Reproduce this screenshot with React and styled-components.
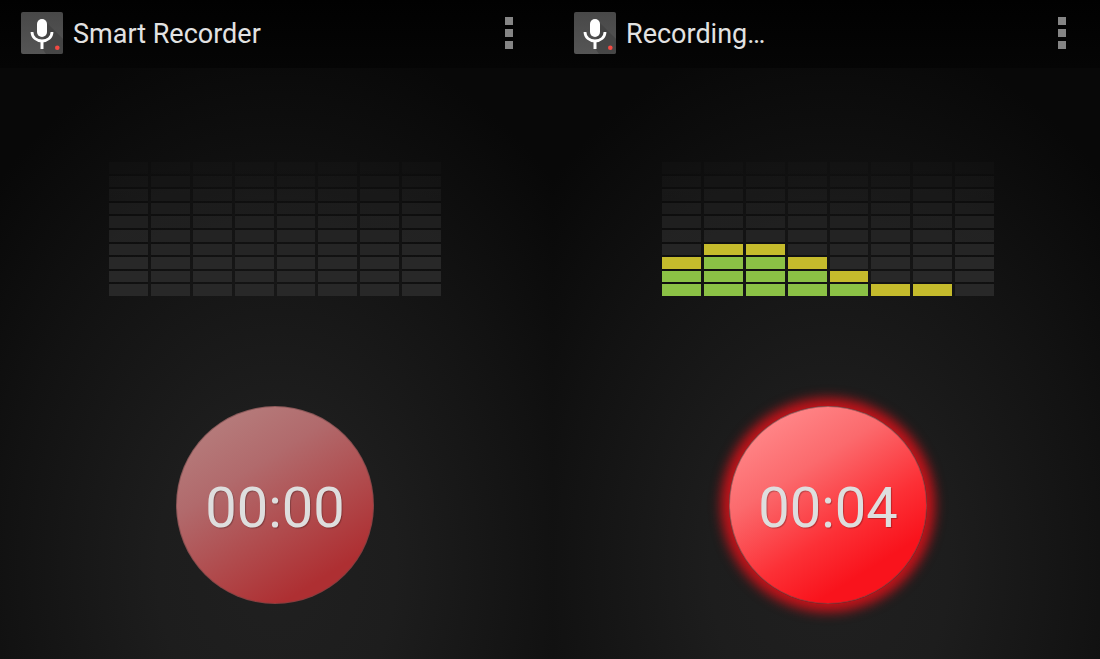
import React from 'react';
import styled, { createGlobalStyle, css } from 'styled-components';


const GlobalStyle = createGlobalStyle`
    * {
        box-sizing: border-box;
    }
    body {
        margin: 0;
        background-color: #0d0d0d;
        font-family: Roboto, "Noto Sans", sans-serif;
    }
`
const Page = styled.div`
    overflow: hidden;
`
const Screens = styled.div`
    display: grid;
    grid-template-columns: 1fr 1fr;
    margin-right: -6px;
    min-height: 100vh;
`
const Screen = styled.main`
    display: flex;
    flex-direction: column;
    align-items: center;
    padding: 0 3px 54px 0;
    background:
        linear-gradient(#010101, #050505) 0 0 / 100% 68px no-repeat,
        radial-gradient(ellipse 72% 82% at 50% 86%, #202020 0%, #1d1d1d 30%, #121212 68%, #080808 100%);
`
const Header = styled.header`
    width: 100%;
    height: 68px;
    padding: 0 37px 0 21px;
    display: flex;
    align-items: center;
`
const Logo = styled.svg`
    width: 42px;
    height: 42px;
    flex: none;
    margin-bottom: 2px;
`
const Title = styled.h1`
    flex: 1;
    margin: 0 0 0 10px;
    color: #e2e2e2;
    font-size: 27px;
    font-weight: 400;
    line-height: 32px;
`
const MenuButton = styled.button`
    display: flex;
    flex-direction: column;
    gap: 4px;
    padding: 0;
    margin-bottom: 2px;
    border: none;
    background: none;
    cursor: pointer;
`
const Dot = styled.span`
    width: 8px;
    height: 8px;
    background-color: #858585;
`
const Meter = styled.div`
    width: 332px;
    height: 134px;
    margin-top: 94px;
    display: grid;
    grid-template-columns: repeat(8, 1fr);
    column-gap: 3px;
`
const Bar = styled.div`
    display: grid;
    grid-template-rows: repeat(10, 1fr);
    row-gap: 2px;
    background: linear-gradient(rgba(0, 0, 0, 0), rgba(0, 0, 0, 0.15) 30%);
`
const segmentColors = {
    level: '#8bc145',
    peak: '#c5bb2c',
    off: '#282828',
}
const Segment = styled.div`
    background-color: ${({ $state }) => segmentColors[$state]};
    opacity: ${({ $state, $row }) => ($state === 'off' ? [0.16, 0.28, 0.42, 0.55, 0.68, 0.8, 0.9, 1, 1, 1][$row] : 1)};
`
const RecordButton = styled.button`
    width: 198px;
    height: 198px;
    margin-top: 110px;
    padding: 6px 0 0;
    border: 1px solid rgba(110, 70, 70, 0.6);
    border-radius: 50%;
    background: linear-gradient(148deg, #b57a7a 14%, #b16a6c 34%, #b04a4c 60%, #ae2f32 82%) border-box;
    color: #dedede;
    font-family: inherit;
    font-size: 56px;
    line-height: 64px;
    text-shadow: 1px 1px 1px rgba(0, 0, 0, 0.25);
    cursor: pointer;
    ${({ $active }) => $active && css`
        background: linear-gradient(148deg, #ff8486 14%, #fb6a6d 34%, #fc3036 60%, #f9131c 78%) border-box;
        box-shadow: 0 0 12px 8px rgba(225, 18, 26, 0.85);
    `}
`

const AppIcon = () => {
    return (
        <Logo viewBox="0 0 42 42" aria-hidden="true">
            <defs>
                <linearGradient id="tile" x1="0" y1="0" x2="0" y2="1">
                    <stop offset="0" stopColor="#484848" />
                    <stop offset="1" stopColor="#555555" />
                </linearGradient>
            </defs>
            <rect width="42" height="42" rx="2" fill="url(#tile)" />
            <path d="M25 10 L42 27 V40 Q42 42 40 42 H25 L21 36 Z" fill="#3d3d3d" opacity="0.6" />
            <rect x="16" y="7" width="10" height="18" rx="5" fill="#fff" />
            <path d="M11 20 C11 25.500 15.500 29 21 29 S31 25.500 31 20" fill="none" stroke="#fff" strokeWidth="2.800" />
            <path d="M21 29 V37" stroke="#fff" strokeWidth="3" />
            <circle cx="36.300" cy="35.700" r="2.300" fill="#f44a43" />
        </Logo>
    )
}

const LevelMeter = ({ levels }) => {
    const rows = [0, 1, 2, 3, 4, 5, 6, 7, 8, 9];
    const stateOf = (row, level) => {
        const height = 10 - row;
        if (level === 0 || height > level) return 'off';
        return height === level ? 'peak' : 'level';
    }
    return (
        <Meter role="img" aria-label="Sound level">
            {levels.map((level, i) => (
                <Bar key={i}>
                    {rows.map((row) => (
                        <Segment key={row} $row={row} $state={stateOf(row, level)} />
                    ))}
                </Bar>
            ))}
        </Meter>
    )
}

const Recorder = ({ title, levels, time, active }) => {
    return (
        <Screen>
            <Header>
                <AppIcon />
                <Title>{title}</Title>
                <MenuButton aria-label="More options">
                    <Dot />
                    <Dot />
                    <Dot />
                </MenuButton>
            </Header>
            <LevelMeter levels={levels} />
            <RecordButton $active={active}>{time}</RecordButton>
        </Screen>
    )
}

const App = () => {
    return (
        <Page>
            <GlobalStyle />
            <Screens>
                <Recorder title="Smart Recorder" levels={[0, 0, 0, 0, 0, 0, 0, 0]} time="00:00" />
                <Recorder title="Recording…" levels={[3, 4, 4, 3, 2, 1, 1, 0]} time="00:04" active />
            </Screens>
        </Page>
    )
}

export default App
